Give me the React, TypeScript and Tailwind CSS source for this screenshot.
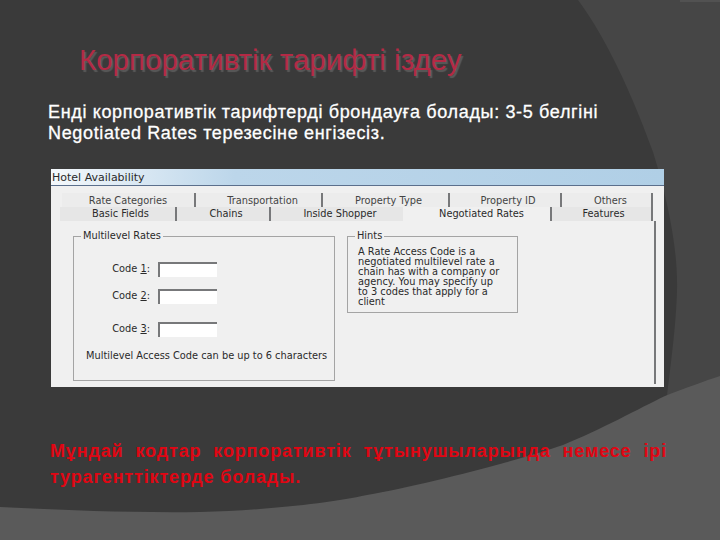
const topTabs = [
  { label: 'Rate Categories', w: 'w-[134px]', pad: '' },
  { label: 'Transportation', w: 'w-[127px]', pad: 'pl-[8px]' },
  { label: 'Property Type', w: 'w-[127px]', pad: 'pl-[6px]' },
  { label: 'Property ID', w: 'w-[112px]', pad: 'pl-[6px]' },
  { label: 'Others', w: 'w-[91px]', pad: 'pl-[8px]' },
];

const bottomTabs = [
  { label: 'Basic Fields', w: 'w-[117px]', pad: 'pl-[6px]', edge: 'border-[#77787a]' },
  { label: 'Chains', w: 'w-[94px]', pad: 'pl-[6px]', edge: 'border-[#77787a]' },
  { label: 'Inside Shopper', w: 'w-[132px]', pad: 'pl-[8px]', edge: 'border-transparent' },
  { label: 'Negotiated Rates', w: 'w-[149px]', pad: 'pl-[10px]', edge: 'border-[#77787a]', active: true },
  { label: 'Features', w: 'w-[101px]', pad: 'pl-[4px]', edge: 'border-[#77787a]' },
];

const hintLines = [
  'A Rate Access Code is a',
  'negotiated multilevel rate a',
  'chain has with a company or',
  'agency. You may specify up',
  'to 3 codes that apply for a',
  'client',
];

function CodeRow({ n, className }: { n: string; className: string }) {
  return (
    <div className={`flex items-center ${className}`}>
      <span className="w-[78px] pr-[3px] text-right">
        Code <span className="underline">{n}</span>:
      </span>
      <div className="ml-[5px] h-[15px] w-[59px] border-t-2 border-l-2 border-[#77787a] bg-white" />
    </div>
  );
}

export default function App() {
  return (
    <div className="relative h-[540px] w-[720px] overflow-hidden bg-[#3a3a3a] font-['Liberation_Sans',sans-serif]">
      <svg className="absolute inset-0" width="720" height="540" viewBox="0 0 720 540">
        <path d="M578 0 C600 30 625 75 653 152 C668 200 678 250 677 290 C676 325 672 355 664 420 L720 420 L720 0 Z" fill="#464646" />
        <path d="M680 0 H720 V2 H680 Z" fill="#525252" />
        <path d="M0 507 C60 510 130 513 200 512 C270 510 330 503 367 495 C420 486 520 460 563 445 C600 430 640 408 665 396 C685 388 705 381 720 376 V540 H0 Z" fill="#5a5a5a" />
      </svg>

      <div className="relative flex flex-col">
        <h1 className="ml-[79px] mt-[42px] h-[36px] text-[29.5px] leading-[36px] text-[#b32a45] [text-shadow:2px_2px_1px_#5a5a5a]">
          Корпоративтік тарифті іздеу
        </h1>

        <p className="ml-[48px] mt-[24px] w-[620px] text-[18px] leading-[21px] tracking-[0.65px] text-white [-webkit-text-stroke:0.3px_white]">
          Енді корпоративтік тарифтерді брондауға болады: 3-5 белгіні
          <br />
          Negotiated Rates терезесіне енгізесіз.
        </p>

        <div className="ml-[51px] mt-[25px] h-[218px] w-[613px] bg-[#f0f0f0] text-[9.8px] text-[#2a2a2a] font-['DejaVu_Sans',sans-serif]">
          <div className="flex h-[17px] items-center border-b border-[#5b6f8c] bg-gradient-to-r from-[#f4f8fb] via-[#bcd6ea] via-30% to-[#b0cfe6] pl-[1px] text-[11px] leading-none">
            Hotel Availability
          </div>

          <div className="ml-[11px] mt-[7px] flex h-[14px] items-center">
            {topTabs.map((t) => (
              <div key={t.label} className={`${t.w} ${t.pad} h-full border-r-2 border-[#77787a] bg-[#ececec] text-center leading-[15px] text-[#444]`}>
                {t.label}
              </div>
            ))}
          </div>

          <div className="ml-[9px] flex h-[14px] items-center">
            {bottomTabs.map((t) => (
              <div
                key={t.label}
                className={`${t.w} ${t.pad} ${t.edge} h-full border-r-2 text-center leading-[14px] ${t.active ? 'bg-[#f0f0f0]' : 'bg-[#e6e6e6]'}`}
              >
                {t.label}
              </div>
            ))}
          </div>

          <div className="ml-[9px] flex h-[163px] w-[596px] items-start border-r-2 border-[#77787a] pl-[13px] pt-[9px]">
            <fieldset className="flex h-[151px] w-[262px] flex-col border border-[#a4a4a4] pl-[1px]">
              <legend className="ml-[6px] px-[2px] leading-[12px]">Multilevel Rates</legend>
              <CodeRow n="1" className="mt-[20px]" />
              <CodeRow n="2" className="mt-[12px]" />
              <CodeRow n="3" className="mt-[18px]" />
              <p className="ml-[11px] mt-[13px] whitespace-nowrap leading-[12px]">Multilevel Access Code can be up to 6 characters</p>
            </fieldset>

            <fieldset className="ml-[12px] h-[83px] w-[171px] border border-[#a4a4a4] pl-[10px]">
              <legend className="ml-[-3px] px-[2px] leading-[12px]">Hints</legend>
              <div className="mt-[5px] leading-[10px]">
                {hintLines.map((line) => (
                  <div key={line} className="whitespace-nowrap">{line}</div>
                ))}
              </div>
            </fieldset>
          </div>
        </div>

        <p className="ml-[50px] mt-[51px] w-[617px] text-justify text-[18px] font-bold leading-[26px] tracking-[0.85px] text-[#e00613]">
          Мұндай кодтар корпоративтік тұтынушыларында немесе ірі турагенттіктерде болады.
        </p>
      </div>
    </div>
  );
}
